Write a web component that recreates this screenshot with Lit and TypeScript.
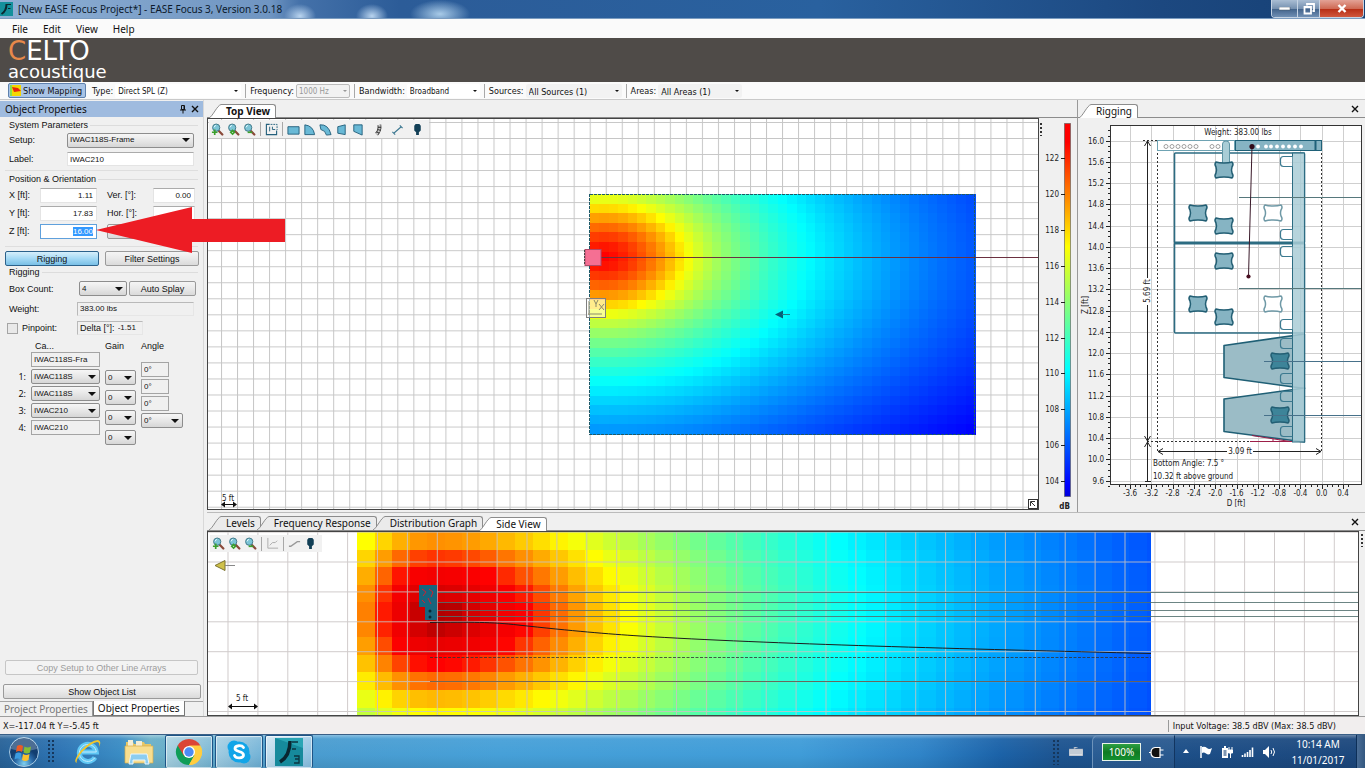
import { LitElement, html, svg, css } from "lit";
import { customElement, state } from "lit/decorators.js";

type Cell = { x: number; y: number; w: number; h: number; c: string };

/** Level scale: 0 = red, 1/3 = yellow, 2/3 = cyan, 1 = blue; below 0 darkens. */
function levelColor(t: number): string {
  const n = (v: number) => Math.round(255 * Math.max(0, Math.min(1, v)));
  if (t < 0) return `rgb(${n(Math.max(0.68, 1 + t * 0.45))},0,0)`;
  if (t < 0.32) return `rgb(255,${n(t / 0.32)},0)`;
  if (t < 0.66) {
    const k = (t - 0.32) / 0.34;
    return `rgb(${n(1 - k)},255,${n(k)})`;
  }
  return `rgb(0,${n(1 - (t - 0.66) / 0.34)},255)`;
}

function topCells(): Cell[] {
  const out: Cell[] = [];
  const w = 385 / 41, h = 9.6;
  for (let r = 0; r < 25; r++)
    for (let c = 0; c < 41; c++) {
      const x = c * w, y = r * h;
      const dx = x + w / 2 - 14, dy = y + h / 2 - 63;
      const k = 0.68 - 0.0003 * Math.max(0, dx);
      const d = Math.hypot(dx * k, dy);
      let t = d < 54 ? 0.32 * (d / 54) ** 1.5 : 0.32 + 0.4 * Math.log(d / 54);
      if (d > 130) t += 0.04 * Math.log(d / 130);
      out.push({ x: 382 + x, y: 75 + y, w: w + 0.5, h: h + 0.5, c: levelColor(t) });
    }
  return out;
}

function sideCells(): Cell[] {
  const out: Cell[] = [];
  const s = 17.55;
  for (let r = 0; r < 11; r++)
    for (let c = 0; c < 46; c++) {
      const x = c * s, y = r * s;
      const w = Math.min(s, 794 - x);
      if (w <= 0) continue;
      const dx = x + s / 2 - 76, dy = y + s / 2 - 83;
      const d = Math.hypot(dx < 0 ? dx * 2 : dx, dy * 1.9);
      out.push({ x: 149 + x, y: y, w: w, h: s + 0.5, c: levelColor(0.32 + 0.43 * Math.log(Math.max(20, d) / 195)) });
    }
  return out;
}

const TOP = topCells();
const SIDE = sideCells();
const cells = (list: Cell[]) =>
  list.map((q) => svg`<rect x=${q.x} y=${q.y} width=${q.w} height=${q.h} fill=${q.c}></rect>`);

const zoomIcon = (sign: string) => html`<svg class="ico" viewBox="0 0 14 14">
  <path d="M8 8l4.2 4.4" stroke="#8a4a3a" stroke-width="2.4" stroke-linecap="round" />
  <circle cx="5.6" cy="5" r="3.9" fill="#7cc4d6" stroke="#3f7686" stroke-width="1" />
  <path d="M3.4 4.6a2.4 2.4 0 0 1 2-2" stroke="#e6fbff" fill="none" />
  <path d=${sign} stroke="#3ba02c" stroke-width="1.8" fill="none" /></svg>`;
const PLUS = "M4 7v6M1 10h6", FIT = "M4 10l2-2 2 2-2 2z", MINUS = "M5 10h5";
const shape = (d: string) => html`<svg class="ico" viewBox="0 0 14 14"><path d=${d} fill="#69b9d6" stroke="#24607c" stroke-width="1" /></svg>`;
const pinIcon = html`<svg class="ico" viewBox="0 0 14 14"><path d="M5 1h4l1.500 2v5l-2 2v3h-3v-3l-2-2v-5z" fill="#123f56" /></svg>`;

@customElement("app-root")
export class AppRoot extends LitElement {
  @state() private lower = "Side View";

  static styles = css`
    :host {
      display: grid;
      grid-template-rows: 19px 19px 44px 18px minmax(0, 1fr) 18px 34px;
      height: 100vh;
      min-width: 900px;
      overflow: hidden;
      background: #f0f0f0;
      color: #111;
      font: 9px/12px "DejaVu Sans Condensed", "DejaVu Sans", sans-serif;
    }
    * { box-sizing: border-box; }
    button, input, select { font: inherit; color: inherit; margin: 0; }
    button { padding: 0; border: 0; background: none; cursor: pointer; }
    svg { display: block; }
    svg text { font: 8px "DejaVu Sans Condensed", "DejaVu Sans", sans-serif; fill: #222; }
    .ui { font: 10px/14px "Noto Sans", "Open Sans", sans-serif; }

    .titlebar {
      display: flex; align-items: center; color: #0c1a2c;
      background:
        radial-gradient(ellipse 16px 12px at 300px 16px, #b9d4ef, transparent),
        radial-gradient(ellipse 16px 12px at 372px 16px, #b9d4ef, transparent),
        radial-gradient(ellipse 30px 14px at 440px 14px, #a9cbe8, transparent),
        linear-gradient(90deg, #8fb0d4, #6f95c2 270px, #4471a9 300px, #2c5c98 400px, #29619f 60%, #1c4880 85%, #164074);
      border-bottom: 1px solid #7b9cc0;
    }
    .appicon { width: 13px; height: 14px; margin-right: 5px; }
    .titlebar .name { flex: 1; }
    .winbtns { display: flex; align-self: flex-start; margin-right: 1px; border: 1px solid #c5d3e3; border-top: 0; border-radius: 0 0 4px 4px; overflow: hidden; }
    .winbtns button { width: 26px; height: 17px; display: grid; place-items: center; background: linear-gradient(#a9bdd3, #7691b0 50%, #3f6088 51%, #6f8fb4); border-right: 1px solid #c5d3e3; }
    .winbtns .max { width: 22px; }
    .winbtns .close { width: 43px; border: 0; background: linear-gradient(#e3a296, #cf6a55 50%, #b52c14 51%, #d0573d); }

    .menubar { display: flex; align-items: center; gap: 15px; padding: 0 12px; background: #fafafa; }
    .banner { background: #4f4b48; padding: 0 8px; color: #fff; font-family: "DejaVu Sans", sans-serif; display: flex; flex-direction: column; }
    .banner .l1 { font-size: 26px; line-height: 26px; }
    .banner .l1 span { color: #e8894a; }
    .banner .l2 { font-size: 18px; line-height: 15px; }

    .toolbar { display: flex; align-items: center; gap: 4px; padding-left: 8px; background: #fafafa; border-bottom: 1px solid #c9c9c9; }
    .toolbar .map { display: flex; align-items: center; gap: 2px; height: 15px; width: 78px; padding-left: 1px; margin-right: 2px; background: #a9c4e6; border: 1px solid #5f81ad; border-radius: 2px; white-space: nowrap; }
    .sep { width: 1px; height: 14px; background: #a8a8a8; }
    .toolbar label { display: flex; align-items: center; gap: 2px; }
    .drop { position: relative; display: block; }
    .drop::after { content: ""; position: absolute; right: 4px; top: calc(50% - 2px); border: 4px solid transparent; border-top-color: #111; border-bottom: 0; pointer-events: none; }
    .drop select { appearance: none; width: 100%; height: 100%; padding: 0 0 0 2px; border: 1px solid #8d8d8d; border-radius: 2px; background: linear-gradient(#f6f6f6, #e4e4e4 60%, #d6d6d6); display: block; opacity: 1; }
    .toolbar .drop { height: 14px; }
    .toolbar .drop::after { border-width: 2px; border-bottom: 0; right: 3px; top: calc(50% - 1px); }
    .toolbar .drop select { border-color: transparent; background: #fff; font-size: 9px; padding-top: 1px; }
    .toolbar .t select, .toolbar .b select { font-size: 8px; }
    .toolbar .f select { font-size: 8px; border-color: #bbb; background: #f2f2f2; color: #999; }
    .toolbar .s select, .toolbar .a select { background: #f2f2f2; }
    .t { width: 126px; } .f { width: 54px; } .f::after { opacity: 0.4; } .b { width: 73px; } .s { width: 96px; } .a { width: 84px; }

    .main { display: grid; grid-template-columns: 204px minmax(0, 1fr); column-gap: 3px; min-height: 0; position: relative; }
    .panel { display: flex; flex-direction: column; min-height: 0; border-right: 1px solid #d8d8d8; font: 9px/12px "Liberation Sans", Arial, sans-serif; }
    .phead { display: flex; align-items: center; height: 16px; padding: 0 2px 0 5px; background: #9fbbdf; margin-top: 1px; }
    .phead span { flex: 1; }
    .phead button { width: 12px; height: 12px; display: grid; place-items: center; }
    .pbody { flex: 1; display: flex; flex-direction: column; padding: 2px 5px 0 5px; min-height: 0; }
    .legend { display: flex; align-items: center; gap: 2px; padding-left: 4px; }
    .legend::after { content: ""; flex: 1; height: 1px; background: #dcdcdc; }
    .row { display: grid; align-items: center; padding-left: 4px; }
    .row input, .grid input { width: 100%; min-width: 0; height: 14px; padding: 0 3px 0 2px; border: 1px solid #e4e4e4; border-top-color: #ababab; background: #fff; font-size: 8px; line-height: 11px; border-radius: 0; }
    .row input:focus { outline: none; border-color: #5fa0dc; }
    input::selection { background: #3399ff; color: #fff; }
    .row input[readonly] { background: #f0f0f0; border-color: #b9b9b9 #e6e6e6 #e6e6e6 #b9b9b9; }
    .drop select { font-size: 8px; }
    .setup { grid-template-columns: 58px 127px; height: 18px; }
    .setup .drop, .count .drop { height: 15px; }
    .sys { display: flex; flex-direction: column; gap: 1px; padding-bottom: 2px; border-bottom: 1px solid #dedede; margin-bottom: 2px; }
    .pos { grid-template-columns: 31px 57px 10px 46px 42px; height: 18px; }
    .pos input { text-align: right; height: 15px; }
    .pos .go { grid-column: 4 / 6; height: 15px; }
    .posbox { padding: 1px 0 6px; border-bottom: 1px solid #dedede; margin-bottom: 4px; }
    .btn { border: 1px solid #9a9a9a; border-radius: 2px; background: linear-gradient(#f5f5f5, #e9e9e9 50%, #dadada); height: 15px; white-space: nowrap; }
    .seg { display: grid; grid-template-columns: 94px 94px; gap: 6px; }
    .seg .on { background: linear-gradient(#d6effb, #a5daf5 50%, #79bfe6); border-color: #2c628b; }
    .count { grid-template-columns: 68px 48px 67px; column-gap: 2px; height: 21px; }
    .weight { grid-template-columns: 68px 117px; height: 19px; }
    .pin { display: flex; align-items: center; height: 20px; gap: 4px; padding-left: 2px; }
    .pin input[type="checkbox"] { appearance: none; width: 11px; height: 11px; border: 1px solid #a5a5a5; background: #e9e9e9; }
    .pin .pl { width: 51px; }
    .delta { display: flex; align-items: center; height: 14px; width: 66px; border: 1px solid #b9b9b9; border-right-color: #e6e6e6; border-bottom-color: #e6e6e6; padding-left: 2px; white-space: nowrap; }
    .delta input { width: 26px; padding: 0; margin-left: 3px; border: 0; background: none; font-size: 8px; }
    .grid { display: grid; grid-template-columns: 16px 69px 31px 42px; column-gap: 5px; padding-left: 5px; }
    .grid .hd { padding: 2px 0 0 0; height: 14px; }
    .grid .hd.c { padding-left: 4px; }
    .col { display: flex; flex-direction: column; }
    .grid input { background: #f0f0f0; border-color: #a4a4a4; height: 15px; padding-bottom: 0; }
    .cab { gap: 2px; }
    .nums { padding-top: 17px; gap: 2px; text-align: right; font: 9px/15px "Noto Sans", sans-serif; }
    .cab .drop, .gain .drop, .ang .drop { height: 15px; }
    .cab .drop { width: 69px; }
    .gain { gap: 5px; padding-top: 18px; }
    .ang { gap: 2px; padding-top: 10px; }
    .ang input { width: 28px; }
    .grow { flex: 1; }
    .copy { color: #9c9c9c; border-color: #c6c6c6; background: #f3f3f3; margin-right: 0; }
    .show { margin: 9px 2px 2px 3px; font: 9px/12px "Liberation Sans", sans-serif; }
    .ptabs { display: flex; height: 15px; border-top: 1px solid #a5a5a5; }
    .ptabs button { padding: 0 4px; height: 15px; margin-top: -1px; color: #777; white-space: nowrap; border-right: 1px solid #999; }
    .ptabs .on { background: #fff; color: #111; border: 1px solid #777; border-top: 0; }

    .docs { display: grid; grid-template-rows: minmax(0, 1fr) 203px; min-height: 0; min-width: 0; }
    .upper { display: grid; grid-template-columns: minmax(0, 1fr) 288px; min-height: 0; border-bottom: 1px solid #bbb; }
    .upper .doc { padding-bottom: 2px; }
    .doc { display: flex; flex-direction: column; min-width: 0; min-height: 0; }
    .tabs { display: flex; align-items: flex-end; height: 18px; flex: none; padding-left: 2px; border-bottom: 1px solid #8c8c8c; }
    .tab { display: flex; height: 14px; margin-right: -4px; white-space: nowrap; position: relative; }
    .tab svg { width: 14px; height: 14px; flex: none; }
    .tab span { padding: 0 5px 0 3px; line-height: 13px; background: #ebebeb; border: 1px solid #8c8c8c; border-left: 0; border-bottom: 0; border-radius: 0 3px 0 0; height: 14px; }
    .tab path { fill: #ebebeb; stroke: #8c8c8c; }
    .tab.on { height: 14px; margin-bottom: -1px; z-index: 2; }
    .tab.on span { background: #fff; }
    .tab.on path { fill: #fff; }
    .tab.bold { font-weight: 700; }
    .x { margin-left: auto; width: 14px; height: 16px; display: grid; place-items: center; align-self: center; margin-right: 3px; }
    .body { flex: 1; display: flex; min-height: 0; }
    .canvas { flex: 1; position: relative; min-width: 0; background: #fff; border: 1px solid #444; overflow: hidden; }
    .canvas > svg { width: 100%; height: 100%; }
    .tools { position: absolute; left: 1px; top: 1px; display: flex; align-items: center; height: 18px; background: #f1f1f1; padding-right: 4px; }
    .tools.side { left: 2px; top: 3px; height: 17px; }
    .tools button { width: 16px; height: 16px; display: grid; place-items: center; }
    .tools .sep { margin: 0 2px 0 3px; }
    .tools .gap { width: 4px; }
    .ico { width: 13px; height: 13px; fill: none; }
    .scale { width: 38px; flex: none; }
    .rig { border-left: 1px solid #999; }
    .rig .tabs { padding-left: 1px; }
    .rig svg.plot { flex: 1; width: 100%; min-height: 0; }
    .gutter { width: 6px; flex: none; }
    .crisp { shape-rendering: crispEdges; }

    .callout { position: absolute; left: 96px; top: 106px; width: 190px; height: 48px; pointer-events: none; }

    .status { display: flex; align-items: center; background: #f1eeee; padding: 0 3px; border-top: 1px solid #9d9d9d; }
    .status .r { margin-left: auto; border-left: 1px solid #999; padding: 0 26px 0 4px; }

    .taskbar { display: flex; align-items: stretch; color: #fff; border-top: 1px solid #3a5f86;
      background: linear-gradient(rgba(255,255,255,.35), rgba(255,255,255,.05) 12%, rgba(255,255,255,0) 60%, rgba(0,0,0,.08)),
        linear-gradient(90deg, #286298, #2d74b4 60px, #3a8cc4 120px, #6bb0c8 150px, #4a9ccf 300px, #46a0d8 500px, #3f9cd8 800px, #2f84c8 920px, #1b62a8 1000px, #1d5490 1060px, #1c477c); }
    .taskbar button { color: #fff; display: grid; place-items: center; }
    .start { width: 47px; }
    .dots { width: 8px; margin: 4px 0; background-image: radial-gradient(circle, #16375c 1px, transparent 1px); background-size: 4px 4px; }
    .task { width: 48px; margin-right: 2px; border: 1px solid transparent; border-bottom: 0; border-radius: 2px; }
    .task.open { background: linear-gradient(135deg, rgba(255,255,255,.5), rgba(255,255,255,.12)); border-color: #1d5486; box-shadow: inset 0 0 0 1px rgba(255,255,255,.55); }
    .task.hot { background: linear-gradient(135deg, rgba(255,255,255,.75), rgba(255,255,255,.3)); }
    .quick { width: 49px; }
    .first { margin-left: 8px; }
    .tray { margin-left: auto; display: flex; align-items: center; }
    .tray .dots { height: 26px; }
    .tray .kbd { margin: 0 9px; }
    .power { display: flex; align-items: center; gap: 8px; height: 100%; padding: 0 10px 0 9px; border-left: 1px solid #6d93bb; border-top: 1px solid #6d93bb; border-radius: 6px 0 0 0; border-right: 1px solid #123560; background: rgba(255,255,255,.06); }
    .batt { width: 39px; height: 18px; border: 1px solid #e8f4e8; background: linear-gradient(#2ea043, #0e7a22 50%, #149030); text-align: center; line-height: 16px; }
    .icons { display: flex; align-items: center; gap: 7px; padding: 0 6px 0 5px; }
    .clock { width: 72px; text-align: center; line-height: 16px; }
    .desk { align-self: stretch; width: 9px; border-left: 1px solid #0d2f58; background: linear-gradient(90deg, #4a6d96, #33577f); margin-left: 2px; }
    .strong { font-weight: 700; }
  `;

  private drop(cls: string, value: string, label: string, disabled = false) {
    return html`<span class="drop ${cls}"><select aria-label=${label} ?disabled=${disabled}><option>${value}</option></select></span>`;
  }

  private tab(name: string, on: boolean, cls = "", click = () => {}) {
    return html`<button class="tab ui ${on ? "on" : ""} ${cls}" @click=${click}>
      <svg viewBox="0 0 14 14"><path d="M0 14C4 12 8 1.500 12 0.500H15V15H0" stroke-width="1" /></svg><span>${name}</span></button>`;
  }

  private ray = (y: number, x0: number, x1: string | number, c = "#52706f") =>
    svg`<line x1=${x0} y1=${y} x2=${x1} y2=${y} stroke=${c} stroke-opacity=".85"></line>`;

  private topCanvas() {
    return html`<svg role="img" aria-label="Top view level map">
      <defs><pattern id="g1" width="16.03" height="16.03" patternUnits="userSpaceOnUse" x="13" y="3"><path d="M0 .5H17M.5 0V17" stroke="#c6c6c6" fill="none" /></pattern></defs>
      <rect width="100%" height="100%" fill="url(#g1)" />
      <g class="crisp">${cells(TOP)}
        <rect x="381.5" y="75.500" width="385" height="240" fill="none" stroke="#1d5a6a" stroke-dasharray="3 1" /></g>
      <line x1="390" x2="100%" y1="138.500" y2="138.500" stroke="#6b3040" />
      <rect x="377" y="130.500" width="16" height="16" fill="#f56f93" stroke="#b04a68" /><path d="M376.500 131v15" stroke="#444" stroke-dasharray="2 1" />
      <rect x="378.500" y="179.500" width="19" height="19" fill="#fff" fill-opacity=".55" stroke="#7f7f7f" />
      <path d="M381 196v-14M380 195h14M386 181l2 4 2-4M388 185v3M391 185l5 6M396 185l-5 6" fill="none" stroke="#8a8a6a" />
      <path d="M567 195.500l8-4v8z" fill="#05607a" /><path d="M574 195.500h8" stroke="#23808a" />
      <text x="14" y="382">5 ft</text>
      <path d="M14 385.500h14" stroke="#111" /><path d="M13 385.500l4-3v6zM29 385.500l-4-3v6z" fill="#111" />
      <svg x="100%" y="100%" overflow="visible"><rect x="-9.500" y="-9.500" width="9" height="9" fill="#fff" stroke="#333" /><path d="M-3 -3l-4-4M-7.500 -3v-4.500h4.500" stroke="#333" fill="none" /></svg>
    </svg>`;
  }

  private scale() {
    return html`<svg class="scale" role="img" aria-label="Level scale in dB">
      <defs><linearGradient id="lv" x2="0" y2="1"><stop offset="0" stop-color="#f00" /><stop offset=".05" stop-color="#f00" /><stop offset=".33" stop-color="#ff0" /><stop offset=".66" stop-color="#0ff" /><stop offset=".97" stop-color="#00f" /><stop offset="1" stop-color="#0000d8" /></linearGradient></defs>
      <path d="M2 5v13" stroke="#333" stroke-width="2" stroke-dasharray="2 2" />
      <rect x="25.500" y="5.500" width="6" height="373" fill="url(#lv)" stroke="#555" stroke-opacity=".6" />
      ${[122, 120, 118, 116, 114, 112, 110, 108, 106, 104].map((v, i) => svg`<text x="20" y=${43 + i * 35.9} text-anchor="end">${v}</text><path d="M22 ${Math.round(i * 35.9) + 40.5}h4" stroke="#222"></path>`)}
      <text class="strong" x="31" y="391" text-anchor="end">dB</text>
    </svg>`;
  }

  private rigPlot() {
    const zt = Array.from({ length: 17 }, (_, i) => ({ v: (16 - i * 0.4).toFixed(1), y: 22.5 + i * 21.26 }));
    const xt = Array.from({ length: 11 }, (_, i) => ({ v: (-3.6 + i * 0.4).toFixed(1).replace("-0.0", "0.0"), x: 52 + i * 21.3 }));
    const cone = "M-8 -8q3 1 8 1t8 -1q2 2 0 5q-1 3 0 6q2 3 0 5q-3 -1 -8 -1t-8 1q-2 -2 0 -5q1 -3 0 -6q-2 -3 0 -5z";
    const cones: [number, number, string][] = [[146, 52, "s"], [120, 95, "s"], [146, 108, "s"], [195, 95, "h"], [146, 143, "s"], [120, 186, "s"], [146, 199, "s"], [195, 186, "h"], [202, 243, "d"], [202, 297, "d"]];
    const fills: Record<string, string> = { s: "#86b4c3", h: "#fff", d: "#3d8499" };
    const hooks = [39, 112, 129, 202, 221, 256, 274, 309];
    return html`<svg class="plot" role="img" aria-label="Rigging plot of the line array">
      <rect x="32.500" y="7.500" width="251" height="359" fill="#fff" stroke="#333" />
      <g stroke="#cfcfcf">${zt.map((t) => svg`<line x1="33" x2="283" y1=${Math.round(t.y) + 0.5} y2=${Math.round(t.y) + 0.5}></line>`)}
      ${xt.map((t) => svg`<line y1="8" y2="366" x1=${Math.round(t.x) + 0.5} x2=${Math.round(t.x) + 0.5}></line>`)}</g>
      ${zt.map((t) => svg`<text x="26" y=${t.y + 3} text-anchor="end">${t.v}</text><path d="M28 ${Math.round(t.y) + 0.5}h4M30 ${Math.round(t.y) + 5.5}h2M30 ${Math.round(t.y) - 4.5}h2M30 ${Math.round(t.y) - 10.5}h2" stroke="#222"></path>`)}
      ${xt.map((t) => svg`<text x=${t.x} y="378" text-anchor="middle">${t.v}</text><path d="M${Math.round(t.x) + 0.5} 367v4M${Math.round(t.x) + 5.5} 367v2M${Math.round(t.x) - 4.5} 367v2M${Math.round(t.x) - 10.5} 367v2" stroke="#222"></path>`)}
      <text x="158" y="388" text-anchor="middle">D [ft]</text>
      <text transform="translate(10 187) rotate(-90)" text-anchor="middle">Z [ft]</text>
      <text x="160" y="17" text-anchor="middle">Weight: 383.00 lbs</text>
      <path d="M79.500 23v312M243.500 23v312M65 22.500h14M69 323.500h103" stroke="#333" stroke-dasharray="2 2" />
      <rect x="79.500" y="22.500" width="77" height="10" fill="#fff" stroke="#6fa3b3" />
      <rect x="157.500" y="22.500" width="86" height="10" fill="#86b4c3" stroke="#1f6178" /><path d="M237.500 22v11" stroke="#1f6178" stroke-width="2" />
      ${[88, 94, 100, 106, 112, 118, 134, 140].map((x) => svg`<circle cx=${x} cy="28.500" r="2" fill="#fff" stroke="#888" stroke-width=".8"></circle>`)}
      ${[180, 188, 193, 199, 205, 211, 217, 223].map((x) => svg`<circle cx=${x} cy="28.500" r="1.900" fill="#fff"></circle>`)}
      <g fill="none" stroke="#2c6c82" stroke-width="1.600">
        <rect x="96.500" y="35" width="130" height="90" rx="1" /><rect x="96.500" y="125" width="130" height="90" rx="1" /><path d="M96 125h130" stroke-width="3" />
      </g>
      <g fill="#9bbcc6" stroke="#1f5f75" stroke-width="1.600" stroke-linejoin="round">
        <path d="M146 227.500L226.500 216v54.500L146 259.500z" /><path d="M146 281L226.500 270v54L146 313.500z" /></g>
      <rect x="214.500" y="35" width="12" height="289" fill="#a9cdd6" fill-opacity=".85" stroke="#2c6c82" />
      <path d="M144.500 48V26q0 -3 3.500 -3t3.500 3v22" fill="#a9cdd6" stroke="#5e94a4" />
      ${hooks.map((y) => svg`<path d="M214.500 ${y - 0.5}h-9q-3 0 -3 3v4q0 3 3 3h9" fill="#fff" fill-opacity=${y < 210 ? 0.6 : 0} stroke="#3c7a90" stroke-width="1.200"></path>`)}
      ${cones.map(([x, y, k]) => svg`<path transform="translate(${x} ${y})" d=${cone} fill=${fills[k]} stroke=${k === "h" ? "#6f99a6" : "#235f74"} stroke-width="1.500"></path>`)}
      <path d="M161 79.500H283M161 170.500H283" stroke="#56787c" /><path d="M186 243.500H283M186 297.500H283" stroke="#47718a" />
      <path d="M172 323.500h42M174 317.500l38 6M195 320.500v3" stroke="#9c1f48" fill="none" />
      <path d="M174 28.500L170.500 158.500" stroke="#3a1a2a" /><circle cx="174" cy="28.500" r="2.600" fill="#300a18" /><circle cx="170.500" cy="158.500" r="2.100" fill="#4a1022" />
      <path d="M69.500 23v137M69.500 187v177M66.500 28l3-5 3 5M66.500 318l3 5 3-5M66.500 329l3-5 3 5M80 333.500h69M175 333.500h68M85 330.500l-5 3 5 3M238 330.500l5 3-5 3M67 363.500h6" stroke="#222" fill="none" />
      <text transform="translate(72 173) rotate(-90)" text-anchor="middle">5.69 ft</text>
      <text x="162" y="336" text-anchor="middle">3.09 ft</text>
      <text x="75" y="348">Bottom Angle: 7.5 °</text><text x="75" y="361">10.32 ft above ground</text>
    </svg>`;
  }

  private sideCanvas() {
    return html`<svg role="img" aria-label="Side view level map">
      <defs><pattern id="g2" width="29.900" height="29.900" patternUnits="userSpaceOnUse" x="19.500" y="29.500"><path d="M0 .5H31M.5 0V31" stroke="#c8c2c2" stroke-opacity=".85" fill="none" /></pattern></defs>
      <g class="crisp">${cells(SIDE)}</g>
      <rect width="100%" height="100%" fill="url(#g2)" />
      ${[60.5, 70.5, 78.5, 84.5].map((y) => this.ray(y, 230, "100%"))}
      <path d="M222 149.500H943" stroke="#5c5040" stroke-opacity=".8" /><path d="M222 125.500H943" stroke="#333" stroke-dasharray="3 1.500" stroke-opacity=".8" />
      <path d="M222 90.500C262 90 285 90 310 93C365 99 400 102 432 104C560 112 760 117 943 121.500" fill="none" stroke="#1c1c1c" />
      <path d="M211 53h18v35h-12v-13h-6z" fill="#17657e" /><path d="M214 57l4 3-3 4M221 57l4 3-2 5M214 68l3 3M220 66l3 6" stroke="#d02030" fill="none" /><circle cx="222" cy="79" r="1.500" fill="#062a36" /><circle cx="222" cy="85" r="1.500" fill="#062a36" />
      <path d="M7 33.500l10-5v10z" fill="#cfc14a" stroke="#7c7330" /><path d="M17 33.500h10" stroke="#888" />
      <text x="28" y="169">5 ft</text>
      <path d="M21 174.500h28" stroke="#111" /><path d="M20 174.500l4-3v6zM50 174.500l-4-3v6z" fill="#111" />
    </svg>`;
  }

  private tools(side: boolean) {
    const b = (label: string, icon: unknown) => html`<button aria-label=${label}>${icon}</button>`;
    return html`<div class="tools ${side ? "side" : ""}">
      ${b("Zoom in", zoomIcon(PLUS))}${b("Zoom to fit", zoomIcon(FIT))}${b("Zoom out", zoomIcon(MINUS))}<i class="sep"></i>
      ${side
        ? html`${b("Axes", html`<svg class="ico" viewBox="0 0 14 14"><path d="M2 1v11h11M4 9l3-3h3l2-2" stroke="#aaa" /></svg>`)}<i class="sep"></i>
            ${b("Line", html`<svg class="ico" viewBox="0 0 14 14"><path d="M1 10h2l7-5h3" stroke="#999" stroke-width="1.500" /></svg>`)}${b("Marker", pinIcon)}`
        : html`${b("Select", html`<svg class="ico" viewBox="0 0 14 14"><path d="M5 1.500H1.500V12.500H12.500V8" stroke="#24607c" stroke-width="1.200" /><path d="M6 1.500h7v6" stroke="#24607c" stroke-dasharray="2 1" /><path d="M5 4v5M8 4v3h3" stroke="#24607c" /></svg>`)}<i class="sep"></i>
            ${b("Rectangle", shape("M1 4h12v8H1z"))}${b("Quarter circle", shape("M2 2q9 1 10.500 10.500H2z"))}${b("Arc", shape("M1 2q9-1 12 10.500l-5 .5Q7 8 2 7z"))}${b("Trapezoid", shape("M3 4l8-2v10.500L3 11z"))}${b("Polygon", shape("M3 2h9v11L3 9z"))}<i class="gap"></i>
            ${b("Line array", html`<svg class="ico" viewBox="0 0 14 14"><path d="M9 2q1 6-3 10" stroke="#222" stroke-width="4" /><path d="M9 2q1 6-3 10" stroke="#ccc" stroke-width="2.500" stroke-dasharray="2 1" /></svg>`)}<i class="gap"></i>
            ${b("Line", html`<svg class="ico" viewBox="0 0 14 14"><path d="M3 11l8-7M1.500 9.500l3 3M9.500 2.500l3 3" stroke="#3d7891" stroke-width="1.200" /></svg>`)}<i class="gap"></i>
            ${b("Marker", pinIcon)}`}
    </div>`;
  }

  private closeX = html`<svg width="8" height="8" viewBox="0 0 8 8"><path d="M1 1l6 6M7 1l-6 6" stroke="#111" stroke-width="1.400" /></svg>`;

  private panel() {
    const pos = (id: string, l: string, v: string) => html`<label for=${id}>${l}</label><input id=${id} .value=${v} />`;
    return html`<aside class="panel">
      <div class="phead ui"><span>Object Properties</span>
        <button aria-label="Pin"><svg width="8" height="9" viewBox="0 0 8 9"><path d="M2.500 .5h3v4h-3zM1 5h6M4 5v3.500M5 1v4" stroke="#111" fill="none" /></svg></button>
        <button aria-label="Close">${this.closeX}</button></div>
      <div class="pbody">
        <div class="legend">System Parameters</div>
        <div class="sys">
          <div class="row setup"><span>Setup:</span>${this.drop("", "IWAC118S-Frame", "Setup")}</div>
          <div class="row setup"><label for="lb">Label:</label><input id="lb" .value=${"IWAC210"} /></div>
        </div>
        <div class="legend">Position &amp; Orientation</div>
        <div class="posbox">
          <div class="row pos">${pos("px", "X [ft]:", "1.11")}<i></i>${pos("pv", "Ver. [°]:", "0.00")}</div>
          <div class="row pos">${pos("py", "Y [ft]:", "17.83")}<i></i>${pos("ph", "Hor. [°]:", "0.00")}</div>
          <div class="row pos">${pos("pz", "Z [ft]:", "16.00")}<i></i><button class="btn go" aria-label="Aim"></button></div>
        </div>
        <div class="seg"><button class="btn on">Rigging</button><button class="btn">Filter Settings</button></div>
        <div class="legend">Rigging</div>
        <div class="row count"><span>Box Count:</span>${this.drop("", "4", "Box count")}<button class="btn">Auto Splay</button></div>
        <div class="row weight"><label for="wt">Weight:</label><input id="wt" readonly .value=${"383.00 lbs"} /></div>
        <div class="pin"><input type="checkbox" id="pp" /><label class="pl" for="pp">Pinpoint:</label>
          <span class="delta"><label for="dl">Delta [°]:</label><input id="dl" readonly .value=${"-1.51"} /></span></div>
        <div class="grid">
          <span class="hd"></span><span class="hd c">Ca...</span><span class="hd">Gain</span><span class="hd">Angle</span>
          <div class="col nums">${[1, 2, 3, 4].map((n) => html`<span>${n}:</span>`)}</div>
          <div class="col cab"><input aria-label="Frame" readonly .value=${"IWAC118S-Fra"} />
            ${this.drop("", "IWAC118S", "Cabinet 1")}${this.drop("", "IWAC118S", "Cabinet 2")}${this.drop("", "IWAC210", "Cabinet 3")}
            <input aria-label="Cabinet 4" readonly .value=${"IWAC210"} /></div>
          <div class="col gain">${[1, 2, 3, 4].map((n) => this.drop("", "0", `Gain ${n}`))}</div>
          <div class="col ang">${[1, 2, 3].map((n) => html`<input aria-label="Angle ${n}" readonly .value=${"0°"} />`)}${this.drop("", "0°", "Angle 4")}</div>
        </div>
        <div class="grow"></div>
        <button class="btn copy" disabled>Copy Setup to Other Line Arrays</button>
      </div>
      <button class="btn show">Show Object List</button>
      <div class="ptabs ui"><button class="ui">Project Properties</button><button class="ui on">Object Properties</button></div>
    </aside>`;
  }

  private taskbar() {
    return html`<footer class="taskbar">
      <button class="start" aria-label="Start"><svg width="32" height="32" viewBox="0 0 32 32"><defs><radialGradient id="orb" cy=".9"><stop stop-color="#7fd0f0" /><stop offset=".6" stop-color="#2a6aa8" /><stop offset="1" stop-color="#123e70" /></radialGradient></defs>
        <circle cx="16" cy="16" r="14.500" fill="url(#orb)" stroke="#a8cbe4" stroke-width="1" /><path d="M3 13a13 12 0 0 1 26 0q-13 4-26 0z" fill="#fff" fill-opacity=".25" />
        <path d="M9 10q3-2 6 0l-1 6q-3-2-6 0z" fill="#ec5a25" /><path d="M16.500 10.500q3 2 6.500 0l-1 6q-3 2-6.500 0z" fill="#84bd36" /><path d="M7.500 17.500q3-2 6 0l-1 6q-3-2-6 0z" fill="#3c9be0" /><path d="M15 18q3 2 6.500 0l-1 6q-3 2-6.500 0z" fill="#fbc02d" /></svg></button>
      <i class="dots"></i>
      <button class="task quick first" aria-label="Internet Explorer"><svg width="30" height="28" viewBox="0 0 30 28"><path d="M22 19.500A8.500 8.500 0 1 1 23.300 14H9" fill="none" stroke="#5fc8f5" stroke-width="5" /><path d="M22 19.500A8.500 8.500 0 1 1 23.300 14H9" fill="none" stroke="#c4ecfc" stroke-width="1" /><path d="M4 25Q-1 24 8 12.500Q18 2 25 2Q29 3 26 9Q27 4 24 4Q18 5 9 14Q2 23 4 25z" fill="#f4c629" /></svg></button>
      <button class="task quick" aria-label="Explorer"><svg width="30" height="26" viewBox="0 0 30 26"><path d="M2 3h7l1 2h3l1-2h6l1 2h6v19H2z" fill="#e8c766" /><path d="M4 1h5v6H4zM12 2h6v6h-6z" fill="#f4edd4" /><path d="M1 7h28v17H1z" fill="#f8de8f" stroke="#d5ae4c" stroke-width=".7" /><path d="M7 15h16l2 10h-4v-4H9v4H5z" fill="#8ccdf0" stroke="#e6f6ff" /></svg></button>
      <button class="task open" aria-label="Chrome"><svg width="28" height="28" viewBox="-14 -14 28 28"><path d="M0 0L-11.300 -6.500A13 13 0 0 1 11.300 -6.500z" fill="#db4437" /><path d="M0 0L-11.300 -6.500A13 13 0 0 0 0 13z" fill="#0f9d58" /><path d="M0 0L0 13A13 13 0 0 0 11.300 -6.500z" fill="#ffcd40" /><path d="M0-6.500H11.300L5 0z" fill="#ffcd40" /><path d="M-11.300 -6.500L-5 4L0-6z" fill="#db4437" /><path d="M-5.200 3L0 13L6 3z" fill="#0f9d58" /><path d="M6 2L0 13A13 13 0 0 0 12 -5z" fill="#ffcd40" /><circle r="6" fill="#fff" /><circle r="4.700" fill="#4c8bf5" /></svg></button>
      <button class="task open" aria-label="Skype"><svg width="28" height="28" viewBox="0 0 28 28"><circle cx="14" cy="14" r="10.500" fill="#12a5e8" /><circle cx="9" cy="9" r="6.500" fill="#12a5e8" /><circle cx="19" cy="19" r="6.500" fill="#12a5e8" /><path d="M18.500 9.500C17 7 10 7 10 10.500C10 14.500 18.500 12.500 18.500 17C18.500 20.500 11 21 9.500 17.500" fill="none" stroke="#fff" stroke-width="2.800" stroke-linecap="round" /></svg></button>
      <button class="task open hot" aria-label="EASE Focus"><svg width="28" height="28" viewBox="0 0 28 28"><rect width="28" height="28" fill="#168a9c" /><path d="M0 0h28v10z" fill="#2aa5b4" /><path d="M15 3Q15 18 5 24" fill="none" stroke="#092630" stroke-width="3.500" /><path d="M17 4h6M17 11h4M19 18h5v3h-4h4v4h-5" fill="none" stroke="#0b3540" stroke-width="1.300" /></svg></button>
      <div class="tray ui">
        <i class="dots"></i>
        <svg class="kbd" width="14" height="9" viewBox="0 0 14 9"><path d="M0 2h14v7H0zM5 2V0h4" fill="#d9dee4" stroke="#8796a8" stroke-width=".6" /><path d="M1.500 4h11M1.500 6h11" stroke="#8796a8" stroke-dasharray="1 1" /></svg>
        <div class="power"><span class="batt">100%</span>
          <svg width="15" height="13" viewBox="0 0 15 13"><path d="M6 1.500h5v10H6Q2 11 2 6.500T6 1.500zM11 4h3.500M11 9h3.500M0 6.500h2" fill="#111" stroke="#fff" stroke-width="1.200" /></svg></div>
        <div class="icons">
          <svg width="12" height="6" viewBox="0 0 12 6"><path d="M6 0l3 4H3z" fill="#fff" /></svg>
          <svg width="14" height="14" viewBox="0 0 14 14"><path d="M2 1v12" stroke="#fff" stroke-width="1.500" /><path d="M3 2q3-1 5 1t5 0l-2 6q-2 1-4-.5T3 8z" fill="#fff" /></svg>
          <svg width="14" height="14" viewBox="0 0 14 14"><path d="M2 3h6v10H2zM4 1h2v2H4z" fill="#fff" /><path d="M3.500 5h3v6h-3z" fill="#7f97b3" /><path d="M9 2v3M12 2v3M8.500 5h4v3h-4zM10.500 8v5" stroke="#fff" fill="#fff" /></svg>
          <svg width="14" height="14" viewBox="0 0 14 14"><path d="M1.500 12v-2M4 12V8.500M6.500 12V7M9 12V5M11.500 12V2.500" stroke="#fff" stroke-width="1.600" /></svg>
          <svg width="14" height="14" viewBox="0 0 14 14"><path d="M1 5h2l4-4v12L3 9H1z" fill="#fff" /><path d="M9 5q1.500 2 0 4M11 3q3 4 0 8" stroke="#fff" fill="none" /></svg>
        </div>
        <div class="clock">10:14 AM<br />11/01/2017</div>
        <i class="desk"></i>
      </div>
    </footer>`;
  }

  firstUpdated() {
    const z = this.renderRoot.querySelector<HTMLInputElement>("#pz");
    z?.focus({ preventScroll: true });
    z?.select();
  }

  render() {
    return html`
      <header class="titlebar ui">
        <svg class="appicon" viewBox="0 0 13 14"><rect width="13" height="14" fill="#14909c" /><path d="M6.500 2q0 7-5 10" fill="none" stroke="#0b2830" stroke-width="2" /><path d="M6 2.500h5M8 6.500h2.500" stroke="#0b2830" /></svg>
        <span class="name">[New EASE Focus Project*] - EASE Focus 3, Version 3.0.18</span>
        <div class="winbtns"><button aria-label="Minimise"><svg width="12" height="4"><rect width="11" height="3" fill="#fff" stroke="#456" stroke-width=".5" /></svg></button>
          <button class="max" aria-label="Restore"><svg width="12" height="12" viewBox="0 0 12 12"><path d="M4 2.500V1h7v7H9.500M1.500 4h6.500v6.500H1.500z" fill="none" stroke="#fff" stroke-width="1.800" /></svg></button>
          <button class="close" aria-label="Close window"><svg width="10" height="9" viewBox="0 0 10 9"><path d="M1.500 1l7 7M8.500 1l-7 7" stroke="#fff" stroke-width="2.400" /></svg></button></div>
      </header>
      <nav class="menubar ui">${["File", "Edit", "View", "Help"].map((m) => html`<button>${m}</button>`)}</nav>
      <div class="banner"><div class="l1"><span>C</span>ELTO</div><div class="l2">acoustique</div></div>
      <div class="toolbar">
        <button class="map"><svg width="11" height="11" viewBox="0 0 11 11"><rect width="11" height="11" fill="#f5d800" /><path d="M0 0h2v11H0z" fill="#8be04a" /><path d="M2 2l6 1 3 3-7 1z" fill="#e8280c" /></svg>Show Mapping</button>
        <label>Type: ${this.drop("t", "Direct SPL (Z)", "Type")}</label><i class="sep"></i>
        <label>Frequency: ${this.drop("f", "1000 Hz", "Frequency", true)}</label><i class="sep"></i>
        <label>Bandwidth: ${this.drop("b", "Broadband", "Bandwidth")}</label><i class="sep"></i>
        <label>Sources: ${this.drop("s", "All Sources (1)", "Sources")}</label><i class="sep"></i>
        <label>Areas: ${this.drop("a", "All Areas (1)", "Areas")}</label>
      </div>
      <main class="main">
        ${this.panel()}
        <div class="docs">
          <div class="upper">
            <section class="doc"><div class="tabs">${this.tab("Top View", true, "bold")}</div>
              <div class="body"><div class="canvas">${this.topCanvas()}${this.tools(false)}</div>${this.scale()}</div></section>
            <section class="doc rig"><div class="tabs">${this.tab("Rigging", true)}<button class="x" aria-label="Close rigging">${this.closeX}</button></div>${this.rigPlot()}</section>
          </div>
          <section class="doc"><div class="tabs">${["Levels", "Frequency Response", "Distribution Graph", "Side View"].map((n) => this.tab(n, this.lower === n, "", () => (this.lower = n)))}<button class="x" aria-label="Close view">${this.closeX}</button></div>
            <div class="body"><div class="canvas">${this.sideCanvas()}${this.tools(true)}</div><svg class="gutter"><path d="M3 3v13" stroke="#333" stroke-width="2" stroke-dasharray="2 2" /></svg></div></section>
        </div>
        <svg class="callout" viewBox="0 0 190 48"><path d="M0 24L96 1v12h93v23H96v11z" fill="#ed1c24" /></svg>
      </main>
      <div class="status"><span>X=-117.04 ft Y=-5.45 ft</span><span class="r">Input Voltage: 38.5 dBV (Max: 38.5 dBV)</span></div>
      ${this.taskbar()}`;
  }
}
